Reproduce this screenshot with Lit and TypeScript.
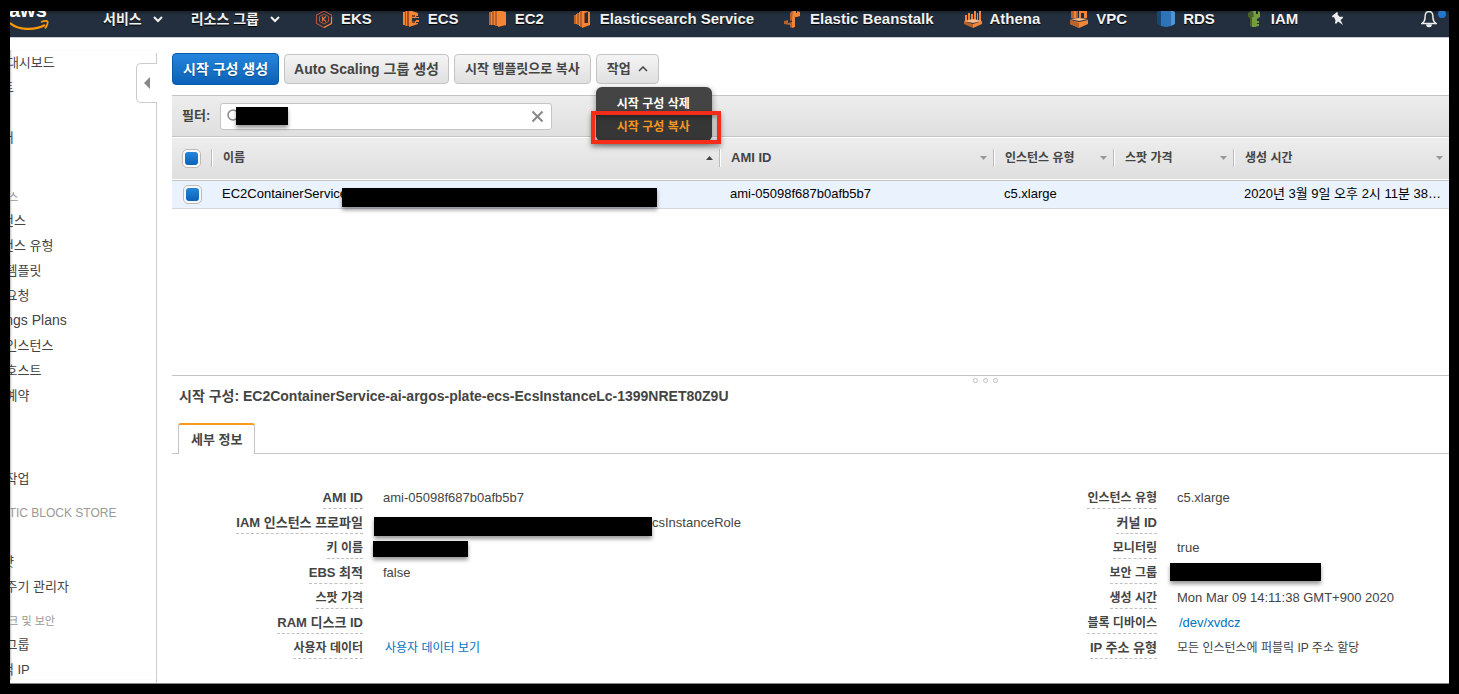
import { LitElement, html, css, svg, nothing } from "lit";
import { customElement, state } from "lit/decorators.js";
import { classMap } from "lit/directives/class-map.js";

const ICONS: Record<string, unknown> = {
  eks: svg`<path d="M9 1 16.500 5v8.500L9 17.500 1.500 13.500V5Z" fill="none" stroke="#b5533a" stroke-width="1.100"/><path d="M9 17.500l7.500-4V7" fill="none" stroke="#f08536" stroke-width="1.200"/><path d="M9 4 13.500 6.500v5L9 14 4.500 11.500v-5Z" fill="none" stroke="#b5533a"/><path d="M7.500 6.500v5M11 6.500 8 9l3 2.500" fill="none" stroke="#d9733a" stroke-width="1.200"/>`,
  ecs: svg`<path d="M1 2h2v13H1zM4 1h1v15H4z" fill="#f58536"/><path d="M3 1h1v15H3zM5 1h2v15H5z" fill="#9d5025"/><path d="M7 0 16 3v3h-2v2h-4v3h4v2h2v1l-9 3Z" fill="#f58536"/><path d="M10 5h3v2h-3zM10 11h3v2h-3z" fill="#8a431e"/><path d="M14 7h3v1h-3zM14 10h3v2h-3z" fill="#f58536"/>`,
  ec2: svg`<path d="M0 2h2v13H0zM3 1h2v14H3zM6 0h3v16H6z" fill="#b5622e"/><path d="M2 2h1v13H2zM5 1h1v14H5zM8 0h1v16H8z" fill="#f58536"/><path d="M9 0 17 2v13l-8 2Z" fill="#f58536"/>`,
  es: svg`<path d="M0 5h2v9H0zM3 3h2v12H3zM6 1h2v16H6z" fill="#b5622e"/><path d="M2 4h1v10H2zM5 2h1v14H5z" fill="#f58536"/><path d="M8 0 16 2v13l-8 3Z" fill="#f58536"/><path d="M10 3l4-1v11h-4Z" fill="#232f3e"/><path d="M10 3h1v10h-1z" fill="#9d5025"/>`,
  eb: svg`<path d="M6 3 9 0v10L6 11Z" fill="#b5622e"/><path d="M9 0h3v3h1V1l3 1v4l-3 1h-2v10l-3 1v-8Z" fill="#f58536"/><path d="M0 11l4-1v3l4-1v6l-2-1v-2l-6-1Z" fill="#b5622e"/>`,
  athena: svg`<path d="M1 5h2v7H1zM4 3h2v9H4zM7 4h2v8H7zM10 1h2v11h-2zM13 3h1v9h-1zM15 1h2v11h-2z" fill="#f58536"/><path d="M0 11l9 2 9-2-9-2Z" fill="#f9b98a"/><path d="M0 11l9 3v4l-9-4Z" fill="#b5622e"/><path d="M18 11l-9 3v4l9-4Z" fill="#f58536"/>`,
  vpc: svg`<path d="M1 0h7v8H1z" fill="#b5622e"/><path d="M9 0h8v8h-3V3h-3v5H9z" fill="#f58536"/><path d="M4 0h2v8H4z" fill="#f58536"/><path d="M0 10l9 2 9-2v4l-9 4-9-4Z" fill="#f58536"/><path d="M0 10l9 3v5l-9-4Z" fill="#b5622e"/><path d="M0 9l9-1 9 1-9 2Z" fill="#f9b98a"/>`,
  rds: svg`<path d="M0 2l4-2v16l-4-2Z" fill="#1a476f"/><path d="M4 0h10v16l-5 1-5-1Z" fill="#2e73b8"/><path d="M14 0l4 2v12l-4 2Z" fill="#5294cf"/>`,
  iam: svg`<path d="M3 3l5-3v8l-1 1v8l-2-1V8L3 7Z" fill="#4b612c"/><path d="M8 0h3v4h2V1l2 1v5l-3 2v2h2v2h-2v1h2v2l-5 1Z" fill="#759c3e"/><path d="M7 7h4v10H7z" fill="#759c3e"/>`,
};

const SERVICES: [string, string][] = [
  ["eks", "EKS"],
  ["ecs", "ECS"],
  ["ec2", "EC2"],
  ["es", "Elasticsearch Service"],
  ["eb", "Elastic Beanstalk"],
  ["athena", "Athena"],
  ["vpc", "VPC"],
  ["rds", "RDS"],
  ["iam", "IAM"],
];

const NAV: { title?: string; items: string[] }[] = [
  { items: ["EC2 대시보드", "이벤트", "태그", "보고서", "제한"] },
  {
    title: "인스턴스",
    items: ["인스턴스", "인스턴스 유형", "시작 템플릿", "스팟 요청", "Savings Plans", "예약 인스턴스", "전용 호스트", "용량 예약"],
  },
  { title: "이미지", items: ["AMI", "번들 작업"] },
  { title: "ELASTIC BLOCK STORE", items: ["볼륨", "스냅샷", "수명 주기 관리자"] },
  { title: "네트워크 및 보안", items: ["보안 그룹", "탄력적 IP"] },
];

const hasHangul = (s: string) => /[가-힣]/.test(s);
const hangulOnly = (s: string) => !/[A-Za-z0-9]/.test(s);

const CONFIG_NAME = "EC2ContainerService-ai-argos-plate-ecs-EcsInstanceLc-1399NRET80Z9U";

@customElement("app-root")
export class AppRoot extends LitElement {
  @state() private menuOpen = true;

  static styles = css`
    :host {
      display: block;
      font-family: "Liberation Sans", "Noto Sans CJK KR", sans-serif;
      font-size: 13px;
      line-height: 20px;
      color: #444;
    }
    * { box-sizing: border-box; }
    a { color: inherit; text-decoration: none; }
    button { font: inherit; cursor: pointer; }
    svg { display: block; flex: none; }
    .frame {
      display: flex;
      height: 100vh;
      padding: 11px 10px 10px;
      background: #000;
    }
    .page {
      flex: 1;
      min-width: 0;
      display: flex;
      flex-direction: column;
      overflow: hidden;
      background: #fff;
      border-bottom: 1px solid #8a8a8a;
    }

    .top {
      flex: none;
      display: flex;
      align-items: flex-end;
      height: 27px;
      overflow: hidden;
      background: linear-gradient(#18212c, #232f3e 4px);
      border-bottom: 1px solid #c8ccd0;
    }
    .bar {
      flex: 1;
      display: flex;
      align-items: center;
      height: 36px;
      padding-right: 12px;
      color: #f2f2f2;
      font-weight: bold;
      font-size: 15px;
      text-shadow: 0 1px 1px #000;
      white-space: nowrap;
    }
    .logo {
      width: 93px;
      text-shadow: none;
    }
    .menu-link {
      display: flex;
      align-items: center;
      gap: 11px;
      padding: 0;
      margin-right: 28px;
      border: 0;
      background: none;
      color: inherit;
      font-size: 14px;
      font-weight: bold;
      text-shadow: inherit;
    }
    .services {
      display: flex;
      gap: 30px;
      margin: 0 33px 0 7px;
    }
    .service {
      display: flex;
      align-items: center;
      gap: 8px;
    }
    .plain {
      padding: 0;
      border: 0;
      background: none;
    }
    .bell {
      position: relative;
      margin-left: auto;
    }
    .dot {
      position: absolute;
      right: -9px;
      top: 0;
      width: 8px;
      height: 8px;
      border-radius: 50%;
      background: #2077cc;
    }

    .body {
      flex: 1;
      min-height: 0;
      display: flex;
      padding-top: 12px;
    }
    .side {
      position: relative;
      flex: none;
      width: 147px;
      margin-top: 3px;
      border-right: 1px solid #ccc;
    }
    .nav {
      height: 100%;
      overflow: hidden;
      margin-top: -3px;
      white-space: nowrap;
      box-shadow: inset 2px 0 2px -1px #bbb;
    }
    .nav-inner { margin-left: -32px; }
    .nav-title {
      display: block;
      height: 33px;
      padding-top: 11px;
      line-height: 22px;
      font-size: 12px;
      color: #999;
    }
    .nav-title.ko { font-size: 11px; }
    .nav-item {
      display: block;
      height: 25px;
      line-height: 25px;
      font-size: 14px;
    }
    .nav-item.ko { font-size: 13px; }
    .collapse {
      position: absolute;
      top: 10px;
      right: -1px;
      display: flex;
      align-items: center;
      width: 21px;
      height: 40px;
      padding: 0 0 0 7px;
      border: 1px solid #ccc;
      border-right: 0;
      border-radius: 5px 0 0 5px;
      background: #fff;
    }

    .main {
      flex: 1;
      min-width: 0;
      display: flex;
      flex-direction: column;
      padding-left: 15px;
    }
    .tools {
      display: flex;
      align-items: center;
      gap: 5px;
      height: 38px;
      margin-bottom: 7px;
    }
    .btn {
      height: 30px;
      padding: 0 9px;
      border: 1px solid #c4c4c4;
      border-radius: 4px;
      background: linear-gradient(#f4f4f4, #e0e0e0);
      color: #444;
      font-size: 14px;
      font-weight: bold;
      white-space: nowrap;
    }
    .btn.ko {
      padding: 0 10px;
      font-size: 13px;
    }
    .btn.primary {
      height: 32px;
      padding: 0 10px;
      border-color: #0a5aa8;
      background: linear-gradient(#2585dc, #0a62b8);
      color: #fff;
      font-size: 14px;
      text-shadow: 0 1px 1px #0a4a8a;
    }
    .drop { position: relative; }
    .drop > .btn {
      display: flex;
      align-items: center;
      gap: 7px;
    }
    .menu {
      position: absolute;
      z-index: 3;
      top: 33px;
      left: 0;
      width: 116px;
      margin: 0;
      padding: 5px 0 0;
      list-style: none;
      overflow: hidden;
      border-radius: 6px;
      background: #444;
      box-shadow: 0 2px 6px rgba(0, 0, 0, 0.4);
    }
    .menu-item {
      display: block;
      width: 100%;
      height: 23px;
      padding: 0 21px;
      border: 0;
      background: #444;
      color: #fff;
      font-size: 12px;
      font-weight: bold;
      text-align: left;
      white-space: nowrap;
    }
    .menu-item.current {
      height: 26px;
      padding-bottom: 3px;
      background: #363636;
      color: #f7981d;
    }
    .mark {
      position: absolute;
      z-index: 4;
      top: 57px;
      left: -5px;
      width: 130px;
      height: 33px;
      border: 4px solid #f52c18;
      box-shadow: 0 3px 5px rgba(0, 0, 0, 0.4), inset 0 2px 4px rgba(0, 0, 0, 0.35);
      pointer-events: none;
    }

    .list {
      flex: 280 1 0;
      min-height: 0;
      border-top: 1px solid #c4c4c4;
      border-bottom: 1px solid #c4c4c4;
    }
    .filter {
      display: flex;
      align-items: center;
      gap: 10px;
      height: 41px;
      padding-left: 10px;
      background: linear-gradient(#ededed, #dfdfdf);
      border-bottom: 1px solid #c4c4c4;
      font-weight: bold;
    }
    .search {
      position: relative;
      display: flex;
      align-items: center;
      width: 332px;
      height: 27px;
      padding: 0 7px 0 6px;
      border: 1px solid #c4c4c4;
      border-radius: 3px;
      background: #fff;
    }
    .search input {
      flex: 1;
      min-width: 0;
      border: 0;
      outline: 0;
      background: none;
      font: inherit;
    }
    .redact {
      display: block;
      flex: none;
      background: #000;
      box-shadow: 0 3px 4px rgba(0, 0, 0, 0.4);
    }
    .redact.query {
      position: absolute;
      left: 15px;
      top: 3px;
      width: 52px;
      height: 18px;
    }
    .redact.name {
      position: absolute;
      left: 131px;
      top: 7px;
      width: 315px;
      height: 19px;
    }

    table {
      width: 100%;
      border-collapse: collapse;
      table-layout: fixed;
      white-space: nowrap;
    }
    th, td {
      padding: 0;
      text-align: left;
    }
    .c-check { width: 39px; }
    .c-ami { width: 274px; }
    .c-type, .c-spot { width: 120px; }
    .c-time { width: 216px; }
    thead tr {
      height: 43px;
      background: linear-gradient(#fff 1px, #ededed 1px, #dfdfdf);
      border-bottom: 1px solid #c4c4c4;
    }
    .head {
      display: flex;
      align-items: center;
      justify-content: space-between;
      height: 18px;
      padding: 0 6px 0 11px;
      border-left: 1px solid #bbb;
      box-shadow: inset 1px 0 #fff;
      font-size: 12px;
    }
    .head.latin { font-size: 13px; }
    tbody tr {
      height: 28px;
      background: #eaf2fe;
      border-bottom: 1px solid #d4d8de;
      color: #000;
    }
    .cell {
      position: relative;
      padding-left: 11px;
      overflow: visible;
    }
    .clip {
      display: block;
      overflow: hidden;
      text-overflow: ellipsis;
      line-height: 20px;
    }
    .check { padding-left: 10px; }
    .check.row { padding-left: 11px; }
    .check input {
      appearance: none;
      display: grid;
      place-items: center;
      width: 19px;
      height: 19px;
      margin: 0;
      border: 1px solid #bbb;
      border-radius: 5px;
      background: #f8f8f8;
    }
    .check input:checked::before {
      content: "";
      width: 13px;
      height: 13px;
      border-radius: 3px;
      background: linear-gradient(#2585dc, #0a62b8);
    }

    .detail {
      position: relative;
      flex: 308 1 0;
      min-height: 0;
    }
    .grip {
      position: absolute;
      top: 2px;
      left: 801px;
      display: flex;
      gap: 5px;
    }
    .grip span {
      width: 5px;
      height: 5px;
      border: 1px solid #c0c0c0;
      border-radius: 50%;
    }
    .title {
      margin: 0;
      padding: 10px 7px 17px;
      font-size: 14px;
      font-weight: bold;
      line-height: 20px;
    }
    .tabs {
      display: flex;
      height: 31px;
      padding-left: 6px;
      box-shadow: inset 0 -1px #c4c4c4;
    }
    .tab {
      height: 31px;
      padding: 0 12px;
      border: 1px solid #c4c4c4;
      border-top: 2px solid #f7981d;
      border-bottom: 0;
      border-radius: 3px 3px 0 0;
      background: #fff;
      color: #444;
      font-weight: bold;
    }
    .columns {
      display: grid;
      grid-template-columns: 794fr 483fr;
      padding-top: 32px;
    }
    .pairs { margin: 0; }
    .pair {
      display: grid;
      grid-template-columns: 191px 1fr;
      column-gap: 20px;
      height: 25px;
    }
    .label {
      justify-self: end;
      height: 23px;
      line-height: 24px;
      border-bottom: 1px dashed #c0c0c0;
      font-weight: bold;
      white-space: nowrap;
    }
    .label.ko, .value.ko { font-size: 12px; }
    .value {
      display: flex;
      align-items: center;
      height: 24px;
      margin: 0;
      white-space: nowrap;
    }
    .value a {
      padding-left: 2px;
      color: #0073bb;
    }
    .redact.role {
      width: 278px;
      height: 19px;
      margin: 6px 0 0 -9px;
    }
    .redact.key {
      width: 95px;
      height: 16px;
      margin: 2px 0 0 -10px;
    }
    .redact.group {
      width: 151px;
      height: 18px;
      margin: 0 0 2px -7px;
    }
  `;

  private chevron() {
    return html`<svg width="10" height="8" viewBox="0 0 10 8" fill="none" stroke="currentColor" stroke-width="2"><path d="M1 2l4 4 4-4" /></svg>`;
  }

  private head(text: string, sorted = false) {
    return html`<th scope="col">
      <div class=${classMap({ head: true, latin: !hasHangul(text) })}>
        ${text}
        <svg width="7" height="4" viewBox="0 0 7 4" fill=${sorted ? "#444" : "#999"}>
          <path d=${sorted ? "M0 4h7L3.500 0Z" : "M0 0h7L3.500 4Z"} />
        </svg>
      </div>
    </th>`;
  }

  private pair(label: string, value: unknown = nothing, ko = false) {
    return html`<div class="pair">
      <dt class=${classMap({ label: true, ko: hangulOnly(label) })}>${label}</dt>
      <dd class=${classMap({ value: true, ko })}>${value}</dd>
    </div>`;
  }

  private renderTop() {
    return html`<header class="top">
      <div class="bar">
        <a class="logo" href="#" aria-label="AWS">
          <svg width="40" height="36" viewBox="0 0 40 36">
            <text x="-1" y="16" font-size="20" font-weight="bold" fill="#fff">aws</text>
            <path d="M0 22C8 29 24 30 35 24" fill="none" stroke="#f90" stroke-width="2.200" />
            <path d="M31 21c3-1 6-1 6.500-.5s0 4-2.500 7" fill="none" stroke="#f90" stroke-width="1.800" />
          </svg>
        </a>
        <button class="menu-link">서비스 ${this.chevron()}</button>
        <button class="menu-link">리소스 그룹 ${this.chevron()}</button>
        <nav class="services">
          ${SERVICES.map(
            ([id, name]) => html`<a class="service" href="#"><svg width="18" height="18" viewBox="0 0 18 18">${ICONS[id]}</svg>${name}</a>`
          )}
        </nav>
        <button class="plain" aria-label="고정">
          <svg width="13" height="14" viewBox="0 0 13 14" fill="#eee">
            <path d="M1 4 6 0l1 1-.5 1.500L9 5l2.500-.5L12 6 9.500 8l2.500 5-5-3.500L5 12l-1-1 .5-2.500L3 5 1.500 5.500Z" />
          </svg>
        </button>
        <button class="plain bell" aria-label="알림">
          <svg width="16" height="18" viewBox="0 0 16 18" fill="none" stroke="#eee" stroke-width="1.500">
            <path d="M8 1.500C4 1.500 4 5 4 8c0 3-1 4-3 5.500h14C13 12 12 11 12 8c0-3 0-6.500-4-6.500Z" />
            <path d="M6 15h4c0 2-4 2-4 0Z" fill="#eee" />
          </svg>
          <span class="dot"></span>
        </button>
      </div>
    </header>`;
  }

  private renderSide() {
    return html`<aside class="side">
      <nav class="nav">
        <div class="nav-inner">
          ${NAV.map(
            (g) => html`${g.title ? html`<span class=${classMap({ "nav-title": true, ko: hasHangul(g.title) })}>${g.title}</span>` : nothing}
            ${g.items.map((t) => html`<a class=${classMap({ "nav-item": true, ko: hasHangul(t) })} href="#">${t}</a>`)}`
          )}
        </div>
      </nav>
      <button class="collapse" aria-label="접기">
        <svg width="6" height="12" viewBox="0 0 6 12" fill="#888"><path d="M6 0v12L0 6Z" /></svg>
      </button>
    </aside>`;
  }

  private renderTools() {
    return html`<div class="tools">
      <button class="btn primary">시작 구성 생성</button>
      <button class="btn">Auto Scaling 그룹 생성</button>
      <button class="btn ko">시작 템플릿으로 복사</button>
      <div class="drop">
        <button class="btn ko" aria-expanded=${this.menuOpen} @click=${() => (this.menuOpen = !this.menuOpen)}>
          작업
          <svg width="10" height="6" viewBox="0 0 10 6" fill="none" stroke="#444" stroke-width="1.500"><path d="M1 5l4-4 4 4" /></svg>
        </button>
        ${this.menuOpen
          ? html`<ul class="menu">
                <li><button class="menu-item">시작 구성 삭제</button></li>
                <li><button class="menu-item current">시작 구성 복사</button></li>
              </ul>
              <span class="mark"></span>`
          : nothing}
      </div>
    </div>`;
  }

  private renderList() {
    return html`<section class="list">
      <div class="filter">
        <label for="filter">필터:</label>
        <div class="search">
          <svg width="14" height="14" viewBox="0 0 14 14" fill="none" stroke="#888" stroke-width="1.500">
            <circle cx="6" cy="6" r="5" /><path d="M9.500 9.500 13 13" />
          </svg>
          <input id="filter" type="text" />
          <button class="plain" aria-label="지우기">
            <svg width="13" height="13" viewBox="0 0 13 13" stroke="#888" stroke-width="2"><path d="M1.500 1.500l10 10M11.500 1.500l-10 10" /></svg>
          </button>
          <span class="redact query"></span>
        </div>
      </div>
      <table>
        <colgroup>
          <col class="c-check" /><col /><col class="c-ami" /><col class="c-type" /><col class="c-spot" /><col class="c-time" />
        </colgroup>
        <thead>
          <tr>
            <th class="check"><input type="checkbox" aria-label="모두 선택" checked /></th>
            ${this.head("이름", true)} ${this.head("AMI ID")} ${this.head("인스턴스 유형")} ${this.head("스팟 가격")} ${this.head("생성 시간")}
          </tr>
        </thead>
        <tbody>
          <tr>
            <td class="check row"><input type="checkbox" aria-label=${CONFIG_NAME} checked /></td>
            <td class="cell"><span class="clip">${CONFIG_NAME}</span><span class="redact name"></span></td>
            <td class="cell">ami-05098f687b0afb5b7</td>
            <td class="cell">c5.xlarge</td>
            <td class="cell"></td>
            <td class="cell"><span class="clip">2020년 3월 9일 오후 2시 11분 38…</span></td>
          </tr>
        </tbody>
      </table>
    </section>`;
  }

  private renderDetail() {
    return html`<section class="detail">
      <div class="grip"><span></span><span></span><span></span></div>
      <h2 class="title">시작 구성: ${CONFIG_NAME}</h2>
      <div class="tabs" role="tablist">
        <button class="tab" role="tab" aria-selected="true">세부 정보</button>
      </div>
      <div class="columns">
        <dl class="pairs">
          ${this.pair("AMI ID", "ami-05098f687b0afb5b7")}
          ${this.pair("IAM 인스턴스 프로파일", html`<span class="redact role"></span>csInstanceRole`)}
          ${this.pair("키 이름", html`<span class="redact key"></span>`)}
          ${this.pair("EBS 최적", "false")}
          ${this.pair("스팟 가격")}
          ${this.pair("RAM 디스크 ID")}
          ${this.pair("사용자 데이터", html`<a href="#">사용자 데이터 보기</a>`, true)}
        </dl>
        <dl class="pairs">
          ${this.pair("인스턴스 유형", "c5.xlarge")}
          ${this.pair("커널 ID")}
          ${this.pair("모니터링", "true")}
          ${this.pair("보안 그룹", html`<span class="redact group"></span>`)}
          ${this.pair("생성 시간", "Mon Mar 09 14:11:38 GMT+900 2020")}
          ${this.pair("블록 디바이스", html`<a href="#">/dev/xvdcz</a>`)}
          ${this.pair("IP 주소 유형", "모든 인스턴스에 퍼블릭 IP 주소 할당", true)}
        </dl>
      </div>
    </section>`;
  }

  render() {
    return html`<div class="frame">
      <div class="page">
        ${this.renderTop()}
        <div class="body">
          ${this.renderSide()}
          <main class="main">${this.renderTools()} ${this.renderList()} ${this.renderDetail()}</main>
        </div>
      </div>
    </div>`;
  }
}
